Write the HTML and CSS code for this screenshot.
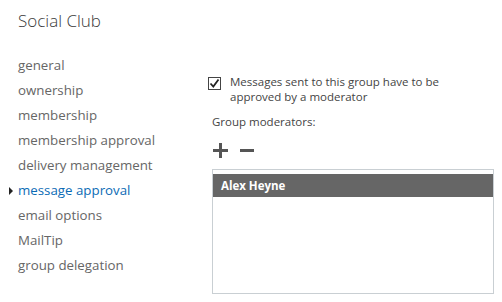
FILE: index.html
```html
<!DOCTYPE html>
<html lang="en">
<head>
  <meta charset="UTF-8" />
  <title>Social Club</title>
  <link rel="stylesheet" href="styles.css">
</head>
<body>
  <div class="page">
    <h1 class="title">Social Club</h1>
    <div class="layout">
      <ul class="nav">
        <li>general</li>
        <li>ownership</li>
        <li>membership</li>
        <li>membership approval</li>
        <li>delivery management</li>
        <li class="active">message approval</li>
        <li>email options</li>
        <li>MailTip</li>
        <li>group delegation</li>
      </ul>

      <div class="content">
        <label class="check">
          <span class="box">
            <svg width="11" height="11" viewBox="0 0 11 11"><path d="M1.5 5.5 L4.3 8.5 L9.5 1.5" fill="none" stroke="#222" stroke-width="1.8"/></svg>
          </span>
          <span class="check-text">Messages sent to this group have to be approved by a moderator</span>
        </label>

        <div class="field-label">Group moderators:</div>
        <div class="tools">
          <svg width="15" height="15" viewBox="0 0 15 15"><path d="M7.5 0v15M0 7.5h15" stroke="#555" stroke-width="3"/></svg>
          <svg width="14" height="15" viewBox="0 0 14 15"><path d="M0 7.5h14" stroke="#555" stroke-width="3"/></svg>
        </div>

        <div class="list">
          <div class="row selected">Alex Heyne</div>
        </div>
      </div>
    </div>
  </div>
</body>
</html>
```

FILE: styles.css
```css
body {
  margin: 0;
  font-family: "Open Sans", "Noto Sans", sans-serif;
  background: #fff;
  color: #444;
}
.page {
  padding: 9px 0 0 18px;
}
.title {
  margin: 0;
  font-size: 17px;
  font-weight: 300;
  color: #3a3a3a;
  line-height: 24px;
}
.layout {
  display: flex;
  margin-top: 20px;
}
.nav {
  list-style: none;
  margin: 0;
  padding: 0;
  width: 190px;
}
.nav li {
  font-size: 13.3px;
  line-height: 25px;
  color: #666;
  position: relative;
}
.nav li.active {
  color: #0b6bb5;
}
.nav li.active::before {
  content: "";
  position: absolute;
  left: -9px;
  top: 9px;
  border-left: 4px solid #222;
  border-top: 4px solid transparent;
  border-bottom: 4px solid transparent;
}
.content {
  width: 286px;
  padding-top: 21px;
}
.check {
  display: flex;
  gap: 9px;
  font-size: 11.5px;
  line-height: 15px;
  color: #444;
}
.check-text {
  max-width: 225px;
}
.box {
  flex: none;
  width: 11px;
  height: 11px;
  border: 1px solid #444;
  margin-top: 3px;
}
.box svg {
  display: block;
}
.field-label {
  margin: 10px 0 0 4px;
  font-size: 11.5px;
  line-height: 16px;
  color: #444;
}
.tools {
  display: flex;
  gap: 12px;
  margin: 13px 0 0 5px;
}
.tools svg {
  display: block;
}
.list {
  margin: 11px 0 0 4px;
  height: 119px;
  border: 1px solid #c9cfd3;
  padding-top: 4px;
}
.row {
  font-size: 11.5px;
  line-height: 23px;
  padding-left: 8px;
}
.row.selected {
  background: #666;
  color: #fff;
  font-weight: bold;
}
```
